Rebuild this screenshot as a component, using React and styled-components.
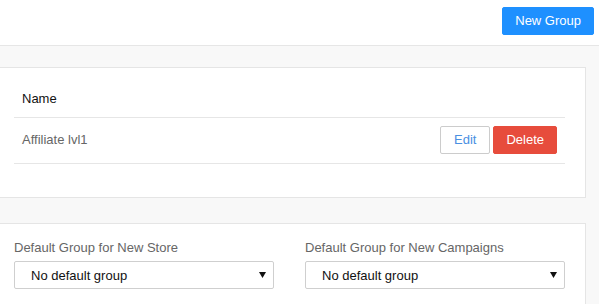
import React from "react";
import styled, { createGlobalStyle } from "styled-components";

const Global = createGlobalStyle`
  html, body { margin: 0; padding: 0; }
  body {
    background: #f8f8f8;
    font-family: "Liberation Sans", Arial, sans-serif;
    font-size: 13px;
    color: #222;
  }
  * { box-sizing: border-box; }
`;

const Header = styled.header`
  height: 46px;
  background: #fff;
  border-bottom: 1px solid #e6e6e6;
  display: flex;
  justify-content: flex-end;
  align-items: flex-start;
  padding: 7px 5px 0 0;
`;

const Button = styled.button`
  height: 28px;
  padding: 0 ${(p) => p.$pad || 12}px;
  font-family: inherit;
  font-size: 13px;
  line-height: 26px;
  border-radius: 2px;
  cursor: pointer;
  border: 1px solid ${(p) => p.$border};
  background: ${(p) => p.$bg};
  color: ${(p) => p.$color};
`;

const Content = styled.main`
  padding: 21px 13px 0 0;
  display: flex;
  flex-direction: column;
  gap: 25px;
`;

const Card = styled.section`
  background: #fff;
  border: 1px solid #e5e5e5;
  border-left: none;
  padding: ${(p) => p.$pad};
`;

const Table = styled.div`
  display: flex;
  flex-direction: column;
`;

const Row = styled.div`
  display: flex;
  align-items: center;
  justify-content: space-between;
  border-bottom: 1px solid #e6e6e6;
  padding: ${(p) => (p.$head ? "8px 8px" : "8px 8px 9px")};
  line-height: 20px;
  color: ${(p) => (p.$head ? "#111" : "#666")};
`;

const Actions = styled.div`
  display: flex;
  gap: 3px;
`;

const Grid = styled.div`
  display: grid;
  grid-template-columns: 1fr 1fr;
  column-gap: 31px;
`;

const Field = styled.div`
  display: flex;
  flex-direction: column;
  gap: 4px;
`;

const Label = styled.label`
  color: #666;
  line-height: 18px;
`;

const SelectBox = styled.div`
  height: 28px;
  border: 1px solid #cfcfcf;
  border-radius: 2px;
  background: #fff;
  display: flex;
  align-items: center;
  justify-content: space-between;
  padding: 0 7px 0 16px;
  color: #111;
`;

const Arrow = () => (
  <svg width="7" height="6" viewBox="0 0 7 6">
    <polygon points="0,0 7,0 3.5,6" fill="#111" />
  </svg>
);

const Select = ({ label, value }) => (
  <Field>
    <Label>{label}</Label>
    <SelectBox>
      <span>{value}</span>
      <Arrow />
    </SelectBox>
  </Field>
);

export default function App() {
  return (
    <>
      <Global />
      <Header>
        <Button $bg="#1e90ff" $border="#1e90ff" $color="#fff" $pad={12}>
          New Group
        </Button>
      </Header>
      <Content>
        <Card $pad="13px 20px 33px 14px">
          <Table>
            <Row $head>Name</Row>
            <Row>
              <span>Affiliate lvl1</span>
              <Actions>
                <Button $bg="#fff" $border="#cccccc" $color="#4a90e2" $pad={13}>
                  Edit
                </Button>
                <Button $bg="#e74c3c" $border="#e74c3c" $color="#fff">
                  Delete
                </Button>
              </Actions>
            </Row>
          </Table>
        </Card>
        <Card $pad="15px 20px 20px 14px">
          <Grid>
            <Select label="Default Group for New Store" value="No default group" />
            <Select label="Default Group for New Campaigns" value="No default group" />
          </Grid>
        </Card>
      </Content>
    </>
  );
}
